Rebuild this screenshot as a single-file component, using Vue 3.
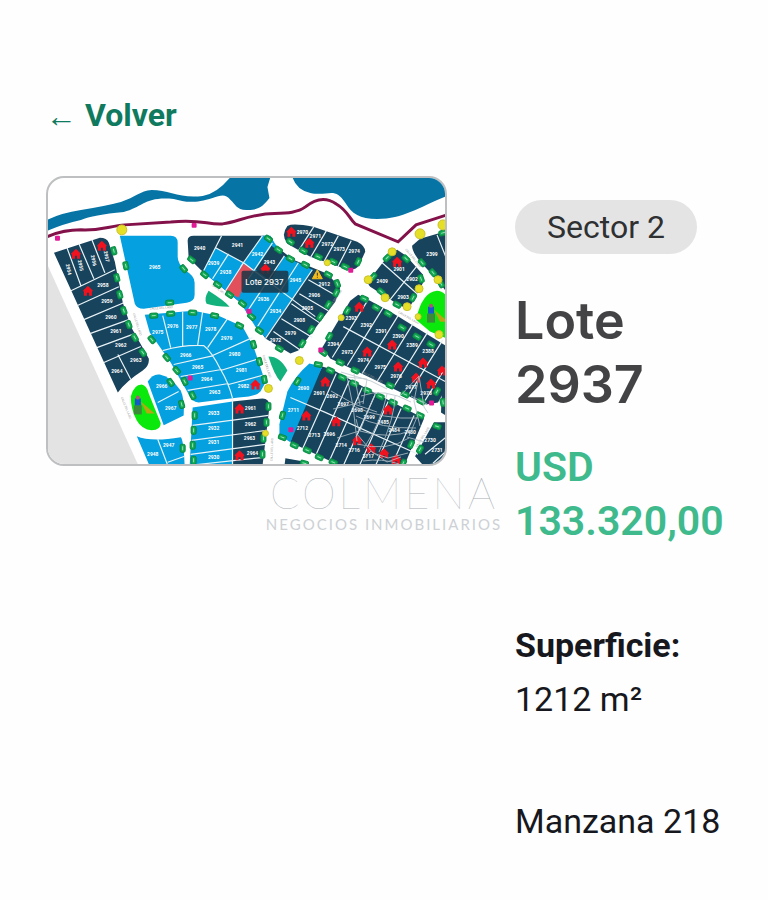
<template>
  <main class="page">
    <a href="#" class="back-link"><span class="arrow">←</span>Volver</a>

    <section class="lot">
      <!-- Plano del loteo con el lote seleccionado -->
      <svg class="plan" viewBox="0 0 398 287" role="img" aria-label="Plano del loteo">
        <g transform="translate(-47 -178)">
          <path class="outside" d="M46 264L138 467H46Z" />

          <!-- Río y camino costero -->
          <path class="river" d="M46 220Q60 213 80 210Q105 206 120 202C135 197 139 191 151 190C168 190 180 199 202 196Q216 194 230 177H270L267 187L269 198C263 206 258 210 248 210C236 211 235 204 230 200C224 193 220 196 212 198C193 204 184 202 173 199C145 196 142 207 123 212Q92 215 80 220Q62 224 46 231Z" />
          <path class="river" d="M292 177Q296 190 310 193C324 196 331 190 338 195C347 202 346 209 357 215Q364 219 377 219C404 219 419 207 447 196V177Z" />
          <path class="coast" d="M46 237Q62 230 80 230C101 231 109 226 124 225L170 222C202 219 206 225 222 224C237 222 243 217 265 214C282 213 296 214 305 207C316 198 326 197 336 204C348 211 349 219 355 224L398 242L416 225L447 215" />

          <!-- Manzanas -->
          <path v-for="(block, i) in blocks" :key="'b' + i" :class="block.kind" :d="block.d" />
          <path class="selected" d="M243 264L252 269L238 298L225 291Z" />
          <path class="divider" :d="dividers" />

          <!-- Plazas -->
          <path class="park" d="M130 397Q133 385 141 385Q146 386 148 394L160 424Q160 431 151 431Q141 430 136 421Q130 410 130 397Z" />
          <path class="park" d="M416 320Q422 292 437 291Q443 291 447 297V339L430 332Z" />
          <g v-for="(p, i) in playgrounds" :key="'p' + i" :transform="`translate(${p[0]} ${p[1]})`">
            <path class="play-slide" d="M3 1L17 13H9Z" />
            <rect class="play-base" x="-4" y="5" width="8" height="9" />
            <rect class="play-house" x="-3" y="-2" width="6" height="7" />
            <circle class="play-roof" cx="0" cy="-3" r="2" />
          </g>
          <path class="green" d="M208 291Q224 301 229 307Q215 307 206 304Q203 299 208 291Z" />
          <path class="green" d="M268 357Q280 357 287 371L280 382Q274 376 268 357Z" />

          <!-- Nombres de calles -->
          <text v-for="(s, i) in streets" :key="'s' + i" class="street" :transform="`translate(${s[0]} ${s[1]}) rotate(${s[2]})`">CALLE DEL LAGO</text>

          <g v-for="(t, i) in trees" :key="'t' + i" :transform="`translate(${t[0]} ${t[1]}) rotate(${t[2]})`">
            <rect class="tree" x="-4" y="-2.5" width="8" height="5" rx="1.5" />
            <path class="tree-mark" d="M-2 0H2" />
          </g>
          <circle v-for="(c, i) in lights" :key="'l' + i" class="light" :cx="c[0]" :cy="c[1]" :r="c[2]" />
          <path v-for="(h, i) in houses" :key="'h' + i" class="house" :transform="`translate(${h[0]} ${h[1]})`" d="M-5 0L0 -5L5 0L4 1V5H1V2H-1V5H-4V1Z" />
          <rect v-for="(m, i) in posts" :key="'m' + i" class="post" :x="m[0] - 2" :y="m[1] - 2" width="5" height="5" rx="1" />

          <text v-for="(n, i) in labels" :key="'n' + i" class="number" :transform="`translate(${n[1]} ${n[2]}) rotate(${n[3] || 0})`">{{ n[0] }}</text>

          <path class="warning" d="M317 270L322 279H312Z" />
          <path class="warning-mark" d="M317 273V276M317 277V278" />

          <rect class="tip" x="241" y="271" width="47" height="22" rx="2" />
          <text class="tip-text" x="264" y="285">Lote 2937</text>
        </g>
      </svg>

      <div class="info">
        <span class="sector">Sector 2</span>
        <h1>Lote 2937</h1>
        <p class="price">USD 133.320,00</p>
        <p class="area"><strong>Superficie:</strong> <span>1212 m²</span></p>
        <p class="block">Manzana 218</p>
      </div>
    </section>

    <!-- Marca de agua de la inmobiliaria -->
    <div class="watermark">
      <svg class="mark" viewBox="0 0 110 100" aria-hidden="true">
        <path d="M18 8L24 37L28 72M25 5L31 36M18 8L38 10L34 35M2 22L25 35L35 32M4 40L25 35L48 43M8 69L30 62L27 50M12 3L42 12L58 20M24 37Q54 51 89 49M27 47Q52 60 87 59M31 62Q60 71 84 61M28 75Q58 83 80 69M47 23Q38 43 31 62M58 25Q52 53 35 79M66 27Q66 48 50 83M32 27Q55 18 82 33M70 28L90 7L85 32L91 57M90 7L95 38L99 44M82 27L98 35M28 65L44 84L59 89L79 84M35 89L42 82L58 93L72 88M34 92Q53 89 70 95M88 48L80 67M78 68L95 73" />
      </svg>
      <span class="brand">COLMENA</span>
      <span class="tagline">NEGOCIOS INMOBILIARIOS</span>
    </div>
  </main>
</template>

<script setup>
// Contorno de cada manzana: "dark" son lotes vendidos, "blue" disponibles
const blocks = [
  { kind: 'dark', d: 'M53 253L99 238Q106 238 108 243L114 262L122 303L130 327L148 359Q149 366 142 371Q125 382 117 393Z' },
  { kind: 'blue', d: 'M119 236H170Q177 236 177 243V257Q177 264 185 271Q194 276 194 283V295Q194 302 186 303L143 309Q136 309 134 304Z' },
  { kind: 'dark', d: 'M187 241Q187 236 193 236H268L275 246L293 260L327 274L340 288L335 302L298 351L290 354L265 339L240 303L200 270L188 258Z' },
  { kind: 'blue', d: 'M215 248L243 263L262 236H270L274 243L283 256L312 270L265 338L256 329L240 303L202 272Z' },
  { kind: 'dark', d: 'M271 246L284 256L270 281L255 270Z' },
  { kind: 'dark', d: 'M287 226Q293 223 313 227L357 242Q365 246 365 252L359 265Q355 272 345 269L310 257L287 244Q280 235 287 226Z' },
  { kind: 'dark', d: 'M388 256L397 250L406 256L423 275V283L411 305Q407 309 400 306L370 287Q366 283 370 279Z' },
  { kind: 'dark', d: 'M412 246L420 239L447 231V293L439 282L422 264Q412 253 412 246Z' },
  { kind: 'dark', d: 'M350 301L358 295L368 300L392 313L447 347V387L438 403L426 405L330 359L322 348Z' },
  { kind: 'dark', d: 'M322 367L332 370L368 390L424 419L404 467H341L290 443L300 410Z' },
  { kind: 'blue', d: 'M322 367L309 364Q295 376 287 392L279 425V436L290 443L304 410Z' },
  { kind: 'dark', d: 'M434 423H447V467H424L415 457Z' },
  { kind: 'dark', d: 'M285 459L302 462L310 467H284Z' },
  { kind: 'dark', d: 'M442 388L447 390V417L441 413Z' },
  { kind: 'blue', d: 'M144 315L193 311L218 316L242 327L253 347L265 383L260 392Q256 397 238 398L198 403Q191 403 187 393L170 363L149 333Z' },
  { kind: 'blue', d: 'M147 382Q152 374 159 375Q170 377 180 391Q184 399 183 416L163 426Z' },
  { kind: 'blue', d: 'M136 437Q150 443 180 438Q183 440 184 467H149Z' },
  { kind: 'blue', d: 'M192 408L232 402V467H189Z' },
  { kind: 'dark', d: 'M232 402L262 399Q269 399 269 407L262 467H232Z' },
];

// Divisiones cruzadas de las dos manzanas grandes de la derecha
const crossLines = [
  ...[0, 1, 2, 3, 4, 5, 6].map((i) => `M${368 + i * 15} ${300 + i * 8}l-36 58`),
  ...[0, 1, 2, 3, 4, 5, 6].map((i) => `M${336 + i * 13} ${374 + i * 7}l-34 76`),
];

const dividers = [
  'M66 248L80 286M78 244L93 279M91 240L104 273M70 291L114 270M76 306L118 287M83 320L123 303M89 334L128 320M96 348L134 334M103 363L140 347M117 355L130 380',
  'M221 236L202 273M215 248L243 263M228 254L212 279M243 263L225 291M262 236L240 267M243 263L315 317M272 243L248 279M284 256L248 310M298 263L257 327M312 270L265 339M308 280L336 296M299 294L328 311M291 304L319 323M281 319L312 338M273 332L299 350',
  'M314 226L298 251M326 231L310 258M338 236L323 263M351 241L337 268',
  'M382 263L417 294M417 266L390 300M437 235L447 260',
  'M343 327L447 383M290 398L325 413L418 455M425 455L447 437M433 464L447 451',
  'M162 351Q183 345 203 346Q211 352 220 370Q228 383 232 399M162 316L170 348M182 312V347M202 312L197 346M227 319L207 348M252 338L212 356M259 359L220 371M265 375L228 385M173 365L213 356M180 377L221 370M187 391L228 384',
  'M157 403L178 392M157 440L167 466M167 463L184 457',
  'M192 426L268 416M191 441L266 431M190 455L265 445M190 466L264 458M232 400V467',
  ...crossLines,
].join('');

const playgrounds = [[137, 401], [431, 309]];

const streets = [
  [120, 398, 68], [149, 310, -4], [211, 286, 34], [132, 314, 72],
  [405, 250, 50], [329, 310, -56], [262, 356, 73], [361, 373, 27],
  [417, 448, -57], [272, 462, -88], [398, 313, 30],
];

// Árboles del borde: x, y, rotación
const trees = [
  [113, 251, 75], [116, 278, 75], [119, 295, 75], [123, 311, 70], [128, 325, 70], [134, 338, 60], [142, 353, 55],
  [125, 266, 78], [183, 269, 50], [169, 303, -3], [153, 316, -3], [170, 314, -3], [192, 313, 3], [214, 316, 12], [239, 326, 25],
  [191, 260, 38], [204, 275, 38], [217, 285, 35], [229, 295, 35], [242, 304, 38], [251, 317, 40], [259, 331, 35],
  [268, 239, 35], [278, 250, 35], [290, 259, 30], [305, 265, 28], [328, 275, 28], [337, 284, 70], [336, 293, -65], [328, 305, -60], [320, 317, -60], [311, 330, -60], [302, 344, -60], [279, 349, 30],
  [290, 242, 35], [303, 251, 30], [318, 257, 25], [333, 262, 28], [345, 267, 25], [358, 262, -65],
  [387, 258, -45], [406, 259, 45], [421, 279, 70], [413, 298, -60], [397, 305, 28], [381, 292, 40], [373, 277, -50],
  [443, 233, -15], [422, 263, 50], [433, 273, 50], [441, 284, 60],
  [364, 299, 25], [376, 308, 30], [388, 314, 30], [402, 328, 30], [417, 337, 30], [431, 345, 30],
  [347, 311, -60], [329, 337, -60], [323, 353, 35], [340, 363, 25], [355, 371, 25], [390, 386, 25], [405, 395, 25], [421, 402, 25], [437, 392, -60],
  [318, 365, 10], [330, 371, 25], [342, 378, 25], [354, 384, 25], [367, 391, 25], [380, 397, 25], [393, 403, 25], [407, 409, 25], [420, 416, 25],
  [297, 382, -60], [282, 416, -75], [282, 438, 20], [294, 446, 25], [307, 451, 25], [319, 458, 25], [333, 463, 25], [411, 445, -65], [403, 464, -65],
  [437, 427, 20], [420, 450, -60], [443, 403, 80], [304, 464, 15],
  [151, 340, 50], [166, 358, 50], [176, 371, 50], [184, 382, 65], [192, 396, 65], [253, 345, 75], [259, 362, 75], [264, 380, 80],
  [170, 383, 55], [181, 405, 75], [182, 449, 90], [194, 416, 90], [193, 431, 90], [192, 446, 90], [193, 461, 90],
  [268, 407, 90], [266, 423, 90], [263, 439, 90], [262, 455, 90],
];

const lights = [
  [121, 230, 5], [392, 252, 4], [368, 280, 4], [385, 298, 4], [407, 307, 4], [419, 289, 4], [420, 234, 5], [443, 225, 5],
  [438, 280, 4], [341, 318, 3], [299, 361, 4], [268, 389, 4], [265, 434, 3], [418, 317, 3], [439, 335, 4], [327, 263, 3],
];

const houses = [
  [75, 254], [101, 246], [87, 291], [291, 232], [309, 243], [265, 269], [397, 262], [359, 307],
  [367, 352], [392, 345], [398, 367], [423, 363], [416, 378], [431, 384], [442, 371], [325, 382],
  [306, 416], [336, 422], [388, 410], [357, 441], [371, 449], [384, 454], [396, 460], [239, 409], [239, 456], [255, 385],
];

const posts = [[56, 238], [193, 225], [350, 270], [248, 311], [189, 378], [320, 350], [431, 403], [290, 430]];

// Número de lote: texto, x, y, rotación opcional
const labels = [
  ['2954', 66, 270, 78], ['2955', 78, 266, 78], ['2956', 91, 261, 78], ['2957', 104, 257, 78],
  ['2958', 102, 287], ['2959', 106, 303], ['2960', 110, 319], ['2961', 115, 333], ['2962', 120, 347], ['2963', 135, 362], ['2964', 116, 373],
  ['2965', 154, 269], ['2940', 199, 250], ['2941', 237, 247], ['2939', 213, 265], ['2938', 225, 274],
  ['2942', 257, 256], ['2943', 269, 264], ['2945', 295, 282], ['2912', 324, 286], ['2936', 263, 301], ['2934', 275, 313], ['2906', 314, 297], ['2905', 307, 310], ['2908', 299, 322], ['2979', 290, 335], ['2972', 275, 342],
  ['2970', 302, 234], ['2971', 315, 238], ['2972', 327, 246], ['2973', 339, 251], ['2974', 354, 253],
  ['2901', 399, 271], ['2409', 382, 283], ['2902', 412, 281], ['2903', 403, 299], ['2399', 432, 256],
  ['2393', 351, 320], ['2392', 366, 327], ['2391', 381, 333], ['2390', 398, 338], ['2389', 412, 347], ['2388', 428, 353], ['2394', 333, 346],
  ['2973', 347, 354], ['2974', 363, 362], ['2975', 380, 369], ['2976', 396, 379], ['2977', 411, 390], ['2978', 426, 396],
  ['2690', 303, 391], ['2711', 293, 413], ['2691', 319, 396], ['2692', 332, 399], ['2697', 343, 407], ['2698', 357, 413], ['2699', 369, 420], ['2485', 383, 425], ['2484', 394, 433], ['2480', 410, 435],
  ['2712', 302, 431], ['2713', 314, 438], ['3696', 329, 437], ['2714', 341, 448], ['2716', 354, 453], ['2717', 368, 459], ['2730', 430, 443], ['2731', 437, 453],
  ['2975', 157, 334], ['2976', 172, 328], ['2977', 191, 329], ['2978', 210, 331], ['2979', 226, 340], ['2980', 234, 356], ['2981', 241, 372], ['2982', 243, 389],
  ['2966', 185, 357], ['2965', 197, 369], ['2964', 206, 382], ['2963', 214, 395], ['2966', 161, 389], ['2967', 170, 411], ['2948', 152, 457], ['2947', 168, 448],
  ['2933', 213, 416], ['2932', 213, 431], ['2931', 213, 445], ['2930', 213, 460], ['2961', 250, 411], ['2962', 250, 427], ['2963', 249, 441], ['2964', 252, 456],
];
</script>

<style>
body {
  margin: 0;
  background: #fefefe;
}
</style>

<style scoped>
.page {
  position: relative;
  padding: 94px 46px 48px;
  color: #16181d;
  font-family: Roboto, sans-serif;
  font-size: 34px;
  line-height: 54px;
}

.back-link {
  display: flex;
  align-items: center;
  gap: 8px;
  width: fit-content;
  color: #107a5f;
  font-size: 32px;
  font-weight: 700;
  line-height: 42px;
  text-decoration: none;
}

.arrow {
  padding-top: 4px;
  font-family: "Liberation Sans", sans-serif;
  font-size: 31px;
  font-weight: 700;
  line-height: 38px;
}

/* Plano a la izquierda y ficha del lote a la derecha */
.lot {
  display: grid;
  grid-template-columns: 1fr 207px;
  gap: 68px;
  align-items: start;
  margin-top: 40px;
}

.plan {
  display: block;
  box-sizing: border-box;
  width: 100%;
  border: 2px solid #bdbfc0;
  border-radius: 18px;
  background: #fff;
}

.info {
  padding-top: 23px;
}

.sector {
  display: inline-block;
  padding: 0 32px;
  border-radius: 27px;
  background: #e4e4e4;
  color: #2f3032;
  font-size: 32px;
}

h1 {
  margin: 35px 0 0;
  color: #434345;
  font-family: Inter, sans-serif;
  font-size: 52px;
  font-weight: 600;
  line-height: 64px;
}

.price {
  margin: 23px 0 0;
  color: #3fba8d;
  font-size: 41px;
  font-weight: 600;
}

.area {
  margin: 70px 0 0;
}

.area strong,
.area span {
  display: block;
}

.block {
  margin: 68px 0 0;
  white-space: nowrap;
}

/* Colores del plano */
.outside { fill: #e3e3e4; }
.river { fill: #0675a6; }
.coast { fill: none; stroke: #84124a; stroke-width: 3; }
.dark { fill: #18435c; }
.blue { fill: #04a0df; }
.selected { fill: #e2505b; }
.divider { fill: none; stroke: #e9f3f7; stroke-width: 1.2; }
.park { fill: #0be80b; }
.green { fill: #13b17b; }
.tree { fill: #12a854; stroke: #078a42; stroke-width: 1; }
.tree-mark { stroke: #9be3b6; stroke-width: 1; }
.light { fill: #e5df27; stroke: #c9c12b; stroke-width: 1; }
.house { fill: #f0121f; }
.post { fill: #e31a96; }
.play-slide { fill: #b9a514; }
.play-base { fill: #3d8a3b; }
.play-house { fill: #1659c7; }
.play-roof { fill: #b0547a; }
.warning { fill: #f5bd1c; stroke: #f5bd1c; stroke-width: 1; }
.warning-mark { stroke: #333; stroke-width: 1; }
.tip { fill: #1c3544; opacity: 0.85; }

.number {
  fill: #fff;
  font-size: 5px;
  font-weight: 700;
  text-anchor: middle;
}

.street {
  fill: #999;
  font-size: 3px;
}

.tip-text {
  fill: #fff;
  font-family: Inter, sans-serif;
  font-size: 8px;
  font-weight: 500;
  text-anchor: middle;
}

/* La marca de agua queda por encima de todo y no captura clics */
.watermark {
  position: absolute;
  top: 369px;
  left: 0;
  right: 0;
  display: flex;
  flex-direction: column;
  align-items: center;
  color: #cdd1d5;
  pointer-events: none;
}

.mark {
  width: 110px;
  height: 100px;
  fill: none;
  stroke: #b7c4cc;
  stroke-width: 1;
  opacity: 0.8;
}

.brand {
  color: #a9afb5;
  font-family: Lato, sans-serif;
  font-size: 43px;
  font-weight: 100;
  letter-spacing: 3px;
  line-height: 48px;
}

.tagline {
  font-family: Lato, sans-serif;
  font-size: 15px;
  letter-spacing: 2px;
  line-height: 14px;
}
</style>
